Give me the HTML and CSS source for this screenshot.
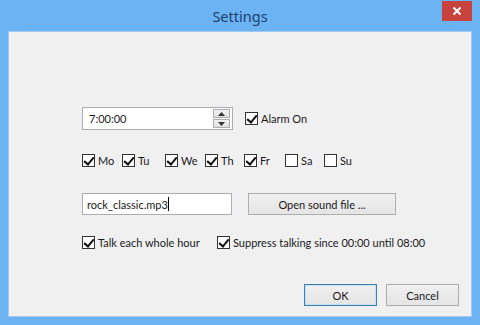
FILE: index.html
```html
<!DOCTYPE html>
<html>
<head>
<meta charset="utf-8">
<link rel="stylesheet" href="styles.css">
</head>
<body>
<div class="window">
  <div class="titlebar">
    <span class="title">Settings</span>
    <div class="close"><svg width="10" height="10" viewBox="0 0 10 10"><path d="M1.5 1.5L8.5 8.5M8.5 1.5L1.5 8.5" stroke="#fff" stroke-width="2"/></svg></div>
  </div>
  <div class="client">
    <div class="row row-time">
      <div class="field time">
        <span class="value">7:00:00</span>
        <div class="spin">
          <div class="spin-btn"><svg width="7" height="4" viewBox="0 0 7 4"><path d="M0 4L3.5 0L7 4Z" fill="#333"/></svg></div>
          <div class="spin-btn"><svg width="7" height="4" viewBox="0 0 7 4"><path d="M0 0L3.5 4L7 0Z" fill="#333"/></svg></div>
        </div>
      </div>
      <label class="check"><span class="box on"></span>Alarm On</label>
    </div>
    <div class="row days">
      <label class="check"><span class="box on"></span>Mo</label>
      <label class="check"><span class="box on"></span>Tu</label>
      <label class="check"><span class="box on"></span>We</label>
      <label class="check"><span class="box on"></span>Th</label>
      <label class="check"><span class="box on"></span>Fr</label>
      <label class="check"><span class="box"></span>Sa</label>
      <label class="check"><span class="box"></span>Su</label>
    </div>
    <div class="row row-file">
      <div class="field file"><span class="value">rock_classic.mp3</span><span class="caret"></span></div>
      <div class="button open">Open sound file ...</div>
    </div>
    <div class="row row-talk">
      <label class="check talk"><span class="box on"></span>Talk each whole hour</label>
      <label class="check"><span class="box on"></span>Suppress talking since 00:00 until 08:00</label>
    </div>
    <div class="actions">
      <div class="button ok">OK</div>
      <div class="button">Cancel</div>
    </div>
  </div>
</div>
</body>
</html>
```
FILE: styles.css
```css
* { box-sizing: border-box; }
html, body { margin: 0; padding: 0; }
body {
  width: 480px;
  height: 325px;
  overflow: hidden;
  font-family: "Lato", "Noto Sans", sans-serif;
  font-size: 11px;
  color: #1a1a1a;
}
.window {
  width: 480px;
  height: 325px;
  background: #6bb3f3;
  display: flex;
  flex-direction: column;
}
.titlebar {
  height: 31px;
  position: relative;
  display: flex;
  justify-content: center;
  align-items: flex-start;
}
.title {
  margin-top: 6px;
  font-family: "Noto Sans", sans-serif;
  font-size: 14.5px;
  color: #20406e;
}
.close {
  position: absolute;
  right: 8px;
  top: 1px;
  width: 30px;
  height: 20px;
  background: #c8433e;
  display: flex;
  align-items: center;
  justify-content: center;
}
.client {
  margin: 0 8px;
  height: 286px;
  background: #f0f0f0;
  border: 1px solid #a3c9ee;
  padding-left: 73px;
  display: flex;
  flex-direction: column;
}
.row { display: flex; align-items: center; }
.row-time { margin-top: 75px; height: 23px; }
.field {
  background: #fff;
  border: 1px solid #abadb3;
  display: flex;
  align-items: center;
  padding-left: 6px;
  position: relative;
}
.time { width: 151px; height: 23px; margin-right: 12px; }
.time .value { flex: 1; }
.spin {
  width: 17px;
  height: 19px;
  margin-right: 2px;
  display: flex;
  flex-direction: column;
  gap: 1px;
}
.spin-btn {
  flex: 1;
  background: linear-gradient(#f2f2f2, #e0e0e0);
  border: 1px solid #adadad;
  display: flex;
  align-items: center;
  justify-content: center;
}
.check { display: flex; align-items: center; white-space: nowrap; }
.box {
  width: 13px;
  height: 13px;
  border: 1px solid #333;
  background: #fff;
  margin-right: 3px;
  position: relative;
}
.box.on::after {
  content: "";
  position: absolute;
  left: 3px;
  top: 0px;
  width: 4px;
  height: 8px;
  border: solid #111;
  border-width: 0 2px 2px 0;
  transform: rotate(40deg);
}
.days {
  margin-top: 22px;
  height: 16px;
  display: grid;
  grid-template-columns: 40px 43px 40px 39px 41px 39px auto;
}
.row-file { margin-top: 25px; height: 22px; }
.file { width: 150px; height: 22px; margin-right: 16px; padding-left: 4px; }
.caret { width: 1px; height: 14px; background: #000; margin-left: 0px; }
.button {
  height: 22px;
  border: 1px solid #adadad;
  background: linear-gradient(#f0f0f0, #e5e5e5);
  display: flex;
  align-items: center;
  justify-content: center;
}
.open { width: 148px; }
.row-talk { margin-top: 19px; height: 16px; }
.talk { width: 135px; }
.actions {
  margin-top: 34px;
  margin-right: 12px;
  display: flex;
  justify-content: flex-end;
  gap: 9px;
}
.actions .button { width: 73px; height: 22px; }
.ok { border-color: #3c7fb1; box-shadow: inset 0 0 0 1px #c6e1f5; }
```
